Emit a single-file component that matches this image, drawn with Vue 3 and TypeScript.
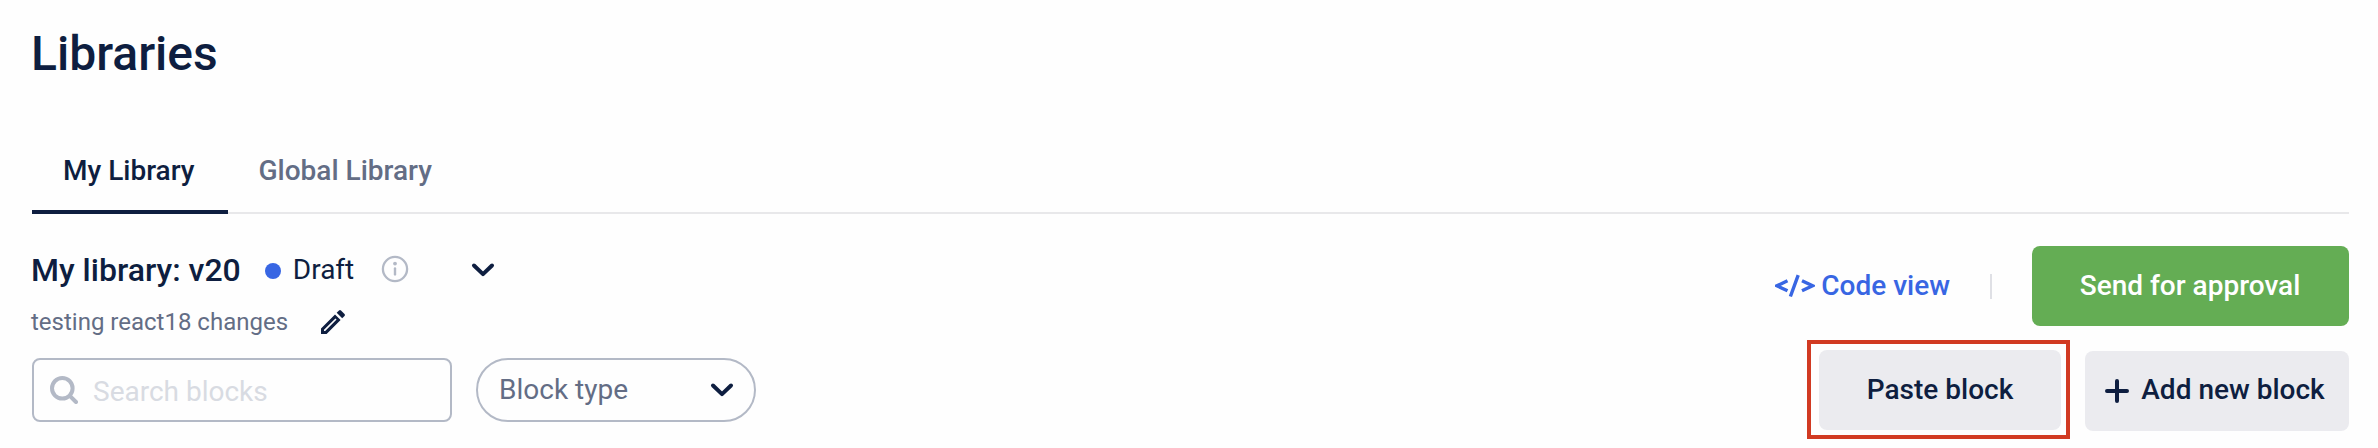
<script setup lang="ts">
import { ref } from 'vue'

interface Tab {
  id: string
  label: string
}

const tabs: Tab[] = [
  { id: 'mine', label: 'My Library' },
  { id: 'global', label: 'Global Library' },
]

const activeTab = ref('mine')
const search = ref('')
</script>

<template>
  <main class="page">
    <h1 class="page-title">Libraries</h1>

    <nav class="tabs">
      <button
        v-for="tab in tabs"
        :key="tab.id"
        type="button"
        class="tab"
        :class="{ active: tab.id === activeTab }"
        @click="activeTab = tab.id"
      >
        {{ tab.label }}
      </button>
    </nav>

    <div class="content">
      <section class="left">
        <div class="version">
          <h2 class="version-name">My library: v20</h2>
          <span class="dot" />
          <span class="status">Draft</span>
          <svg class="info" viewBox="0 0 28 28" fill="none">
            <circle cx="14" cy="14" r="12.1" stroke="#b3b9c6" stroke-width="2.3" />
            <circle cx="14" cy="8.6" r="1.9" fill="#b3b9c6" />
            <path d="M14 13.4v6" stroke="#b3b9c6" stroke-width="2.4" stroke-linecap="round" />
          </svg>
          <svg class="chevron" viewBox="0 0 24 16" fill="none">
            <path d="M3 3.5l9 8.6 9-8.6" />
          </svg>
        </div>

        <div class="description">
          <span class="description-text">testing react18 changes</span>
          <svg class="pencil" viewBox="0 0 24 24">
            <path
              fill-rule="evenodd"
              d="M0 24v-5.600L14 4.400l5.600 5.600L5.600 24zM3 21h1.200L15.600 9.600 14.400 8.400 3 19.800z"
            />
            <path d="M15.700 2.800L18 .5q1-.9 2 0L23.500 4q.9 1 0 2l-2.300 2.300z" />
          </svg>
        </div>

        <div class="filters">
          <label class="search">
            <svg class="search-icon" viewBox="0 0 28 28" fill="none">
              <circle cx="12.300" cy="12.300" r="10.300" />
              <path d="M19.800 19.800l6.200 6.200" />
            </svg>
            <input v-model="search" type="text" placeholder="Search blocks" />
          </label>
          <button type="button" class="select">
            <span class="select-label">Block type</span>
            <svg class="chevron" viewBox="0 0 24 16" fill="none">
              <path d="M3 3.500l9 8.600 9-8.600" />
            </svg>
          </button>
        </div>
      </section>

      <section class="right">
        <div class="actions">
          <button type="button" class="code-view">
            <svg class="code-icon" viewBox="0 0 40 24" fill="none">
              <path d="M12.500 6.800L2 11.800l10.500 5M23.200 1.200L15.400 22.500M27 6.800l10.500 5L27 16.800" />
            </svg>
            <span class="code-label">Code view</span>
          </button>
          <span class="divider" />
          <button type="button" class="btn btn-approve">Send for approval</button>
        </div>
        <div class="actions block-actions">
          <div class="highlight">
            <button type="button" class="btn btn-paste">Paste block</button>
          </div>
          <button type="button" class="btn btn-add">
            <svg class="plus" viewBox="0 0 24 24" fill="none">
              <path d="M12 2v20M2 12h20" />
            </svg>
            <span>Add new block</span>
          </button>
        </div>
      </section>
    </div>
  </main>
</template>

<style>
body {
  margin: 0;
  background: #fefefe;
}
</style>

<style scoped>
.page {
  box-sizing: border-box;
  height: 448px;
  padding: 25px 29px 0 32px;
  overflow: hidden;
  color: #0e1e40;
  font-family: Roboto, 'Liberation Sans', sans-serif;
  font-size: 28px;
}

h1,
h2 {
  margin: 0;
  font-weight: 500;
}

button {
  padding: 0;
  border: 0;
  background: none;
  color: inherit;
  font: inherit;
  white-space: nowrap;
}

svg {
  display: block;
  flex: none;
}

.page-title {
  height: 58px;
  margin-left: -1px;
  font-size: 48px;
  line-height: 58px;
}

.tabs {
  display: flex;
  height: 80px;
  margin-top: 51px;
  background: linear-gradient(#e8e8ea, #e8e8ea) bottom / 100% 2px no-repeat;
}

.tab {
  box-sizing: border-box;
  padding: 0 33px 7px 31px;
  color: #636d85;
  font-weight: 500;
}

.tab.active {
  border-bottom: 4px solid #0e1e40;
  padding-bottom: 3px;
  color: #0e1e40;
}

.content {
  display: flex;
  justify-content: space-between;
}

.left {
  padding-top: 35px;
}

.version {
  display: flex;
  align-items: center;
  height: 40px;
  margin-left: -1px;
}

.version-name {
  padding-top: 2px;
  font-size: 32px;
  line-height: 40px;
}

.dot {
  width: 16px;
  height: 16px;
  margin: 4px 12px 0 24px;
  border-radius: 50%;
  background: #3866e3;
}

.info {
  width: 28px;
  height: 28px;
  margin: 0 62px 0 27px;
}

.chevron {
  width: 24px;
  height: 16px;
}

.version .chevron {
  margin-top: 2px;
}

.chevron path {
  stroke: #0e1e40;
  stroke-width: 4;
  stroke-linecap: round;
  stroke-linejoin: round;
}

.description {
  display: flex;
  align-items: center;
  height: 40px;
  margin: 13px 0 0 -1px;
}

.description-text {
  color: #636d85;
  font-size: 24px;
}

.pencil {
  width: 24px;
  height: 24px;
  margin-left: 33px;
  fill: #0e1e40;
}

.filters {
  display: flex;
  gap: 24px;
  margin-top: 16px;
}

.search,
.select {
  display: flex;
  align-items: center;
  box-sizing: border-box;
  height: 64px;
  border: 2px solid #b3b9c6;
}

.search {
  width: 420px;
  padding-left: 16px;
  border-radius: 8px;
}

.search-icon {
  width: 28px;
  height: 28px;
  stroke: #b3b9c6;
  stroke-width: 4;
  stroke-linecap: round;
}

.search input {
  width: 320px;
  margin: 2px 0 0 15px;
  padding: 0;
  border: 0;
  outline: 0;
  background: none;
  color: #0e1e40;
  font: inherit;
}

.search input::placeholder {
  color: #d8dbe2;
  opacity: 1;
}

.select {
  justify-content: space-between;
  width: 280px;
  padding: 0 20px 0 21px;
  border-radius: 32px;
  color: #636d85;
}

.select-label,
.code-label {
  padding-bottom: 2px;
}

.right {
  padding-top: 32px;
}

.actions {
  display: flex;
  align-items: center;
  justify-content: flex-end;
  font-weight: 500;
}

.code-view {
  display: flex;
  align-items: center;
  color: #3866e3;
}

.code-icon {
  width: 40px;
  height: 24px;
  margin-right: 6px;
  stroke: #3866e3;
  stroke-width: 3.4;
}

.divider {
  width: 2px;
  height: 25px;
  margin: 0 40px;
  background: #dfe0e5;
}

.btn {
  display: flex;
  align-items: center;
  justify-content: center;
  box-sizing: border-box;
  height: 80px;
  padding-bottom: 2px;
  border-radius: 8px;
  background: #ebebef;
}

.btn-approve {
  width: 317px;
  padding-right: 1px;
  background: #64ad54;
  color: #fff;
}

.block-actions {
  margin-top: 14px;
}

/* Red frame around the paste action */
.highlight {
  margin-right: 15px;
  padding: 6px 5px 5px 8px;
  border: 4px solid #d13a22;
}

.btn-paste {
  width: 242px;
}

.btn-add {
  width: 264px;
  margin-top: 2px;
  padding-right: 4px;
}

.plus {
  width: 24px;
  height: 24px;
  margin: 2px 12px 0 0;
  stroke: #0e1e40;
  stroke-width: 4;
  stroke-linecap: round;
}
</style>
